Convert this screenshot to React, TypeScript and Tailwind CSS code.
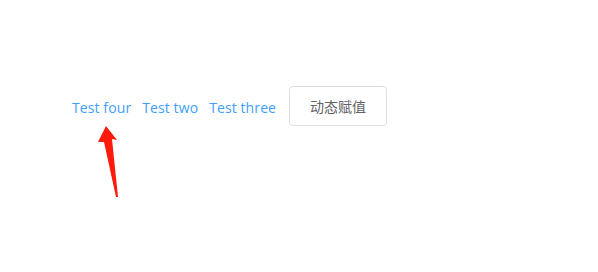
const links = ["Test four", "Test two", "Test three"];

export default function App() {
  return (
    <div className="relative h-[272px] w-[598px] bg-white font-['Open_Sans','Noto_Sans_CJK_SC',sans-serif]">
      <div className="flex items-center pl-[72px] pt-[86px]">
        <div className="mt-[3px] flex items-center gap-[11px]">
          {links.map((label) => (
            <a key={label} className="cursor-pointer text-[14px] leading-[20px] tracking-[0.1px] text-[#409eff]">
              {label}
            </a>
          ))}
        </div>
        <button className="ml-[13px] h-[40px] w-[98px] rounded-[4px] border border-[#dcdfe6] bg-white text-[14px] text-[#606266]">
          动态赋值
        </button>
      </div>

      {/* annotation arrow */}
      <svg className="absolute left-0 top-0" width="598" height="272" viewBox="0 0 598 272">
        <polygon
          points="106,126 117,140 112,139 118,197 116,197 104,142 98,142"
          fill="#ff1a0d"
        />
      </svg>
    </div>
  );
}
